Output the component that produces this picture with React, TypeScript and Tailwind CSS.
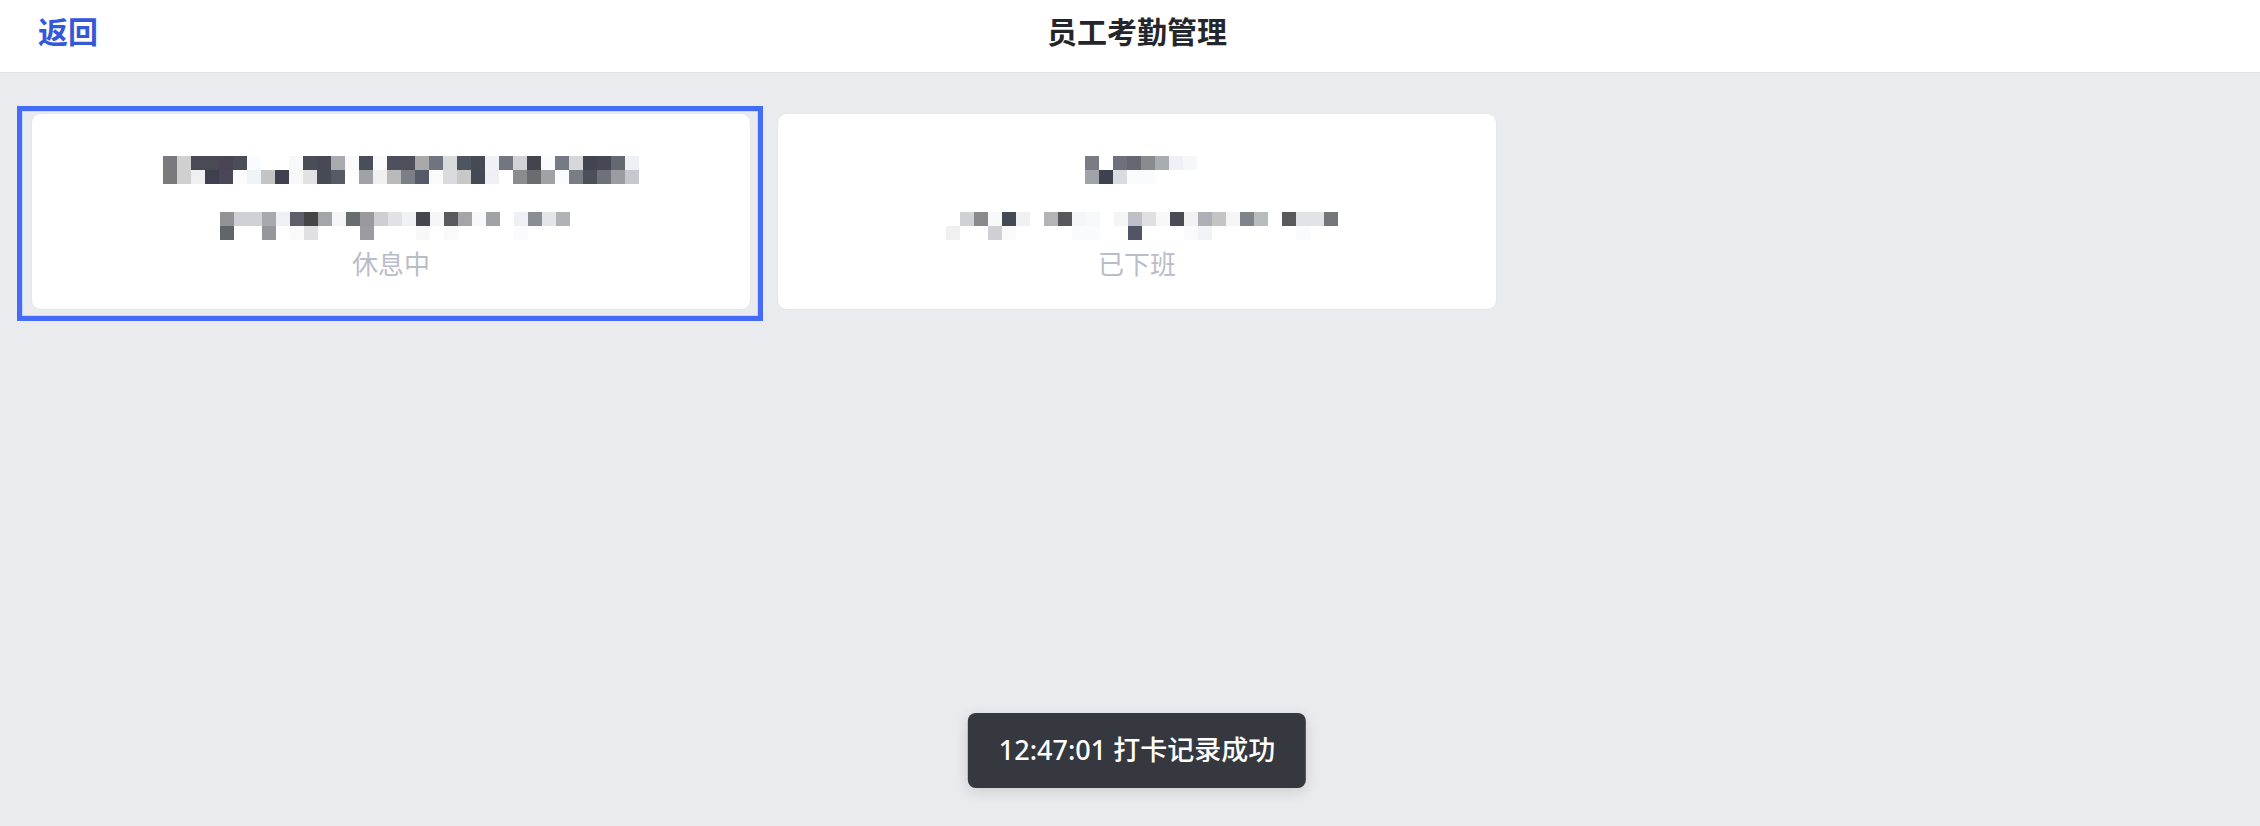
import React from "react";

type Staff = {
  id: string;
  status: string;
  selected: boolean;
  // pixelated (redacted) name + detail lines, 14px blocks
  name: string[][];
  nameShift: string;
  info: string[][];
  infoShift: string;
};

const W = "#ffffff";

const staff: Staff[] = [
  {
    id: "1",
    status: "休息中",
    selected: true,
    name: [
      ["#7a7a7e", "#d0d0d0", "#4a4a55", "#4a4a55", "#4a4555", "#4a4d55", "#fafbfd", W, W, "#f8f9fb", "#4a4c58", "#474a55", "#a9aab0", "#fafafa", "#4a4e5a", "#fafafa", "#4d4f5a", "#4d4f5a", "#a8a9a8", "#707380", "#d9dadb", "#4f5560", "#464a55", "#f0f1f4", "#737580", "#d0d2d6", "#424550", "#fafbfd", "#767a85", "#d5d7da", "#424550", "#454955", "#646870", "#eef0f4"],
      ["#7a7a7a", "#d0d0d0", "#f0f0f2", "#3e4050", "#4a4858", "#fafbfd", "#eef4f8", "#c4c4c4", "#3e424e", "#f8f8f8", "#e2e2e2", "#454a55", "#555a65", W, "#a0a2a8", "#f0f0f0", "#b9b9b9", "#7a7f88", "#545a68", "#fafafa", "#dadbde", "#c8c8c8", "#454955", "#eef0f4", W, "#8a8c90", "#6a6d70", "#a0a2a6", "#fafcfd", "#7a7d85", "#4a4f58", "#6e717a", "#9a9ca2", "#c5c8cf"],
    ],
    nameShift: "translate-x-[10px]",
    info: [
      ["#939396", "#cfd1d6", "#cfd1d6", "#a7a9ae", "#eef0f5", "#5c5e6a", "#454548", "#a4a5a8", "#f5f5f7", "#6a6d70", "#9a9a9e", "#cfcfd3", "#e2e1e5", "#f0f1f4", "#45474f", "#f5f5f7", "#5a5a5e", "#a5a5a7", "#f8f8fa", "#a0a2a5", W, "#eef0f5", "#8a8c93", "#e4e5e8", "#b0b2b8"],
      ["#62666b", W, W, "#96979b", W, "#fafafa", "#e0e0e2", W, W, W, "#9c9ca0", W, W, W, "#f8f8f8", W, "#fafafa", W, W, W, W, "#fbfbfd", W, W, W],
    ],
    infoShift: "translate-x-[4px]",
  },
  {
    id: "2",
    status: "已下班",
    selected: false,
    name: [
      ["#7a7c85", W, "#6e717c", "#656873", "#8a8b8e", "#a9acb0", "#eef0f6", "#f5f7f8"],
      ["#a0a3a8", "#3e424e", "#d8dbe0", "#fafbfd", "#fafbfd", W, W, W],
    ],
    nameShift: "translate-x-[4px]",
    info: [
      [W, "#cfd1d4", "#8a8a8c", "#f8f9fa", "#454954", "#f0f1f2", W, "#b4b4b6", "#58585c", "#f5f6f8", "#f8f9fb", W, "#f5f5f5", "#bfbfc8", "#e0e0e2", "#f8f8f8", "#4a4c55", "#f2f2f4", "#aeaeb6", "#c4c4c4", "#f5f5f5", "#80838a", "#b9bcbd", W, "#5a5a5e", "#e2e3e6", "#e2e3e6", "#75767c"],
      ["#f0f0f0", W, W, "#d0d0d4", "#fafafa", W, W, W, W, "#fafbfd", "#fafbfd", W, W, "#545468", W, W, W, "#fafafa", "#f2f3f7", W, W, W, W, W, W, "#fafbfd", W, W],
    ],
    infoShift: "translate-x-[5px]",
  },
];

function Mosaic({ rows, className }: { rows: string[][]; className: string }) {
  const cols = rows[0].length;
  return (
    <svg
      width={cols * 14}
      height={rows.length * 14}
      className={className}
      shapeRendering="crispEdges">
      {rows.map((row, r) =>
        row.map((c, i) => (
          <rect key={`${r}-${i}`} x={i * 14} y={r * 14} width={14} height={14} fill={c} />
        )),
      )}
    </svg>
  );
}

export default function App() {
  const font = { fontFamily: '"Noto Sans", "Noto Sans CJK SC", sans-serif' };

  return (
    <div className="w-screen h-[826px] overflow-hidden bg-[#eaebee]" style={font}>
      <div className="relative w-[2274px] h-[826px]">
        {/* Header */}
        <div className="relative h-[73px] bg-white border-b border-[#e2e3e7] flex items-center pb-[8px]">
          <button className="pl-[38px] text-[30px] font-bold text-[#3657d8] leading-none">
            返回
          </button>
          <h1 className="absolute left-0 right-0 top-0 h-[72px] flex items-center justify-center pb-[8px] text-[30px] font-semibold text-[#24262c] leading-none pointer-events-none">
            员工考勤管理
          </h1>
        </div>

        {/* Staff cards */}
        <div className="grid grid-cols-[746px_746px_746px] px-[17px] pt-[33px]">
          {staff.map((s) => (
            <div
              key={s.id}
              className={`border-[5px] pt-[2px] pb-[6px] pl-[9px] pr-[7px] ${
                s.selected
                  ? "border-[#456cf6] shadow-[inset_0_0_0_1px_#c9d3fb]"
                  : "border-transparent"
              }`}>
              <div className="h-[197px] bg-white rounded-[10px] border border-[#e6e7ea] flex flex-col items-center pt-[42px]">
                <Mosaic rows={s.name} className={s.nameShift} />
                <Mosaic rows={s.info} className={`mt-[28px] ${s.infoShift}`} />
                <p className="mt-[7px] text-[26px] leading-[34px] text-[#b9bdc7]">
                  {s.status}
                </p>
              </div>
            </div>
          ))}
        </div>

        {/* Toast */}
        <div className="absolute left-1/2 -translate-x-1/2 bottom-[38px] h-[75px] px-[31px] flex items-center rounded-[8px] bg-[#363840] shadow-[0_4px_14px_rgba(0,0,0,0.12)]">
          <span className="text-[27px] font-medium text-white whitespace-nowrap">
            12:47:01 打卡记录成功
          </span>
        </div>
      </div>
    </div>
  );
}
